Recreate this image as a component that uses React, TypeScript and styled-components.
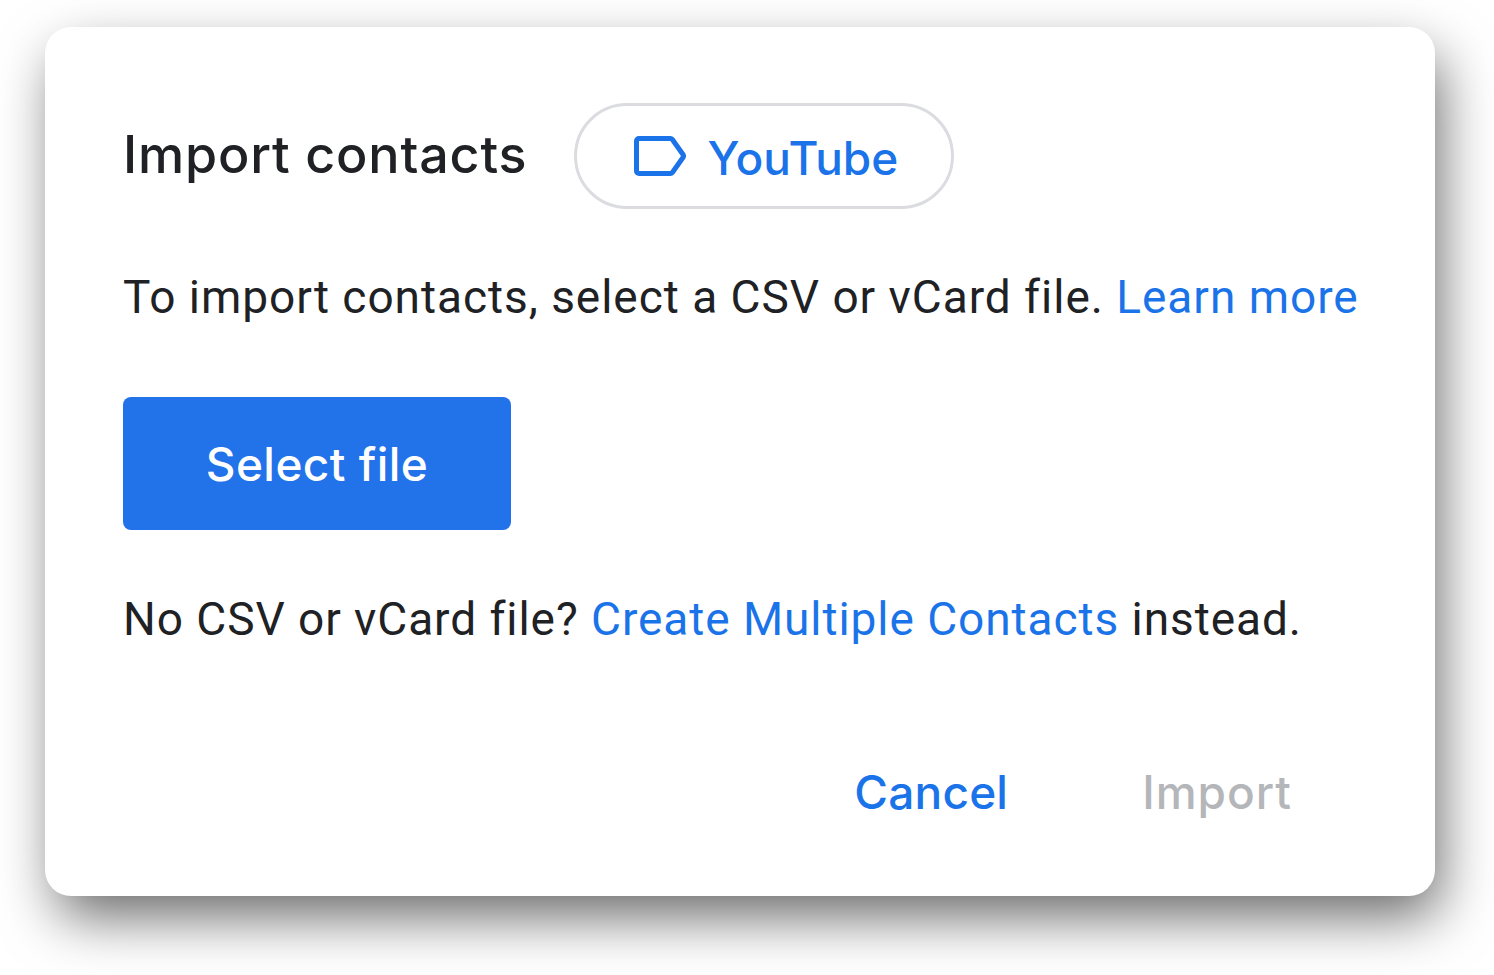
import React from "react";
import styled, { createGlobalStyle } from "styled-components";

const Global = createGlobalStyle`
  html, body { margin: 0; padding: 0; background: #fff; }
  body { font-family: Roboto, "Liberation Sans", sans-serif; overflow: hidden; }
`;

const Page = styled.div`
  width: 1494px;
  height: 975px;
  box-sizing: border-box;
  padding: 27px 59px 79px 45px;
  background: #fff;
`;

const Dialog = styled.div`
  width: 1390px;
  height: 869px;
  box-sizing: border-box;
  padding: 76px 78px 0 78px;
  background: #fff;
  border-radius: 26px;
  box-shadow: 8px 24px 56px -4px rgba(0, 0, 0, 0.6);
  display: flex;
  flex-direction: column;
`;

const Header = styled.div`
  display: flex;
  align-items: center;
  gap: 47px;
  height: 106px;
`;

const Title = styled.h1`
  margin: 0 0 3px;
  font-family: Inter, sans-serif;
  font-size: 52px;
  font-weight: 500;
  color: #202124;
  letter-spacing: 0.83px;
`;

const Chip = styled.div`
  width: 380px;
  height: 106px;
  box-sizing: border-box;
  border: 3px solid #dadce0;
  border-radius: 53px;
  padding: 4px 0 0 4px;
  display: flex;
  align-items: center;
  justify-content: center;
  gap: 21px;
  color: #1a73e8;
  font-family: Inter, sans-serif;
  font-size: 46px;
  font-weight: 500;
`;

const ChipIcon = styled.svg`
  margin-bottom: 4px;
`;

const Paragraph = styled.p`
  margin: 0;
  font-size: 46px;
  line-height: 54px;
  letter-spacing: 0.97px;
  color: #202124;
  white-space: nowrap;
`;

const Intro = styled(Paragraph)`
  margin-top: 61px;
`;

const Alt = styled(Paragraph)`
  margin-top: 62px;
  letter-spacing: 0.94px;
`;

const TextLink = styled.a`
  color: #1a73e8;
`;

const SelectButton = styled.button`
  margin-top: 73px;
  width: 388px;
  height: 133px;
  border: 0;
  border-radius: 8px;
  background: #2272ea;
  color: #fff;
  font-family: Inter, sans-serif;
  font-size: 46px;
  font-weight: 500;
  letter-spacing: 0.45px;
`;

const Actions = styled.div`
  margin-top: auto;
  margin-bottom: 77px;
  margin-right: 65px;
  display: flex;
  justify-content: flex-end;
  gap: 134px;
`;

const ActionButton = styled.button<{ $disabled?: boolean }>`
  padding: 0;
  border: 0;
  background: none;
  font-family: Inter, sans-serif;
  font-size: 46px;
  line-height: 54px;
  font-weight: 500;
  letter-spacing: ${(p) => (p.$disabled ? "1px" : "0.2px")};
  color: ${(p) => (p.$disabled ? "#b4b6b9" : "#1a73e8")};
`;

export default function App() {
  return (
    <Page>
      <Global />
      <Dialog>
        <Header>
          <Title>Import contacts</Title>
          <Chip>
            <ChipIcon width="52" height="40" viewBox="0 0 52 40" fill="none">
              <path
                d="M5 2.5H36.5Q37.5 2.500 38.200 3.300L49 18.500Q50 20 49 21.500L38.200 36.700Q37.500 37.500 36.500 37.500H5A2.500 2.500 0 0 1 2.500 35V5A2.500 2.500 0 0 1 5 2.500Z"
                stroke="#1a73e8"
                strokeWidth="5"
                strokeLinejoin="round"
              />
            </ChipIcon>
            YouTube
          </Chip>
        </Header>
        <Intro>
          To import contacts, select a CSV or vCard file. <TextLink>Learn more</TextLink>
        </Intro>
        <SelectButton>Select file</SelectButton>
        <Alt>
          No CSV or vCard file? <TextLink>Create Multiple Contacts</TextLink> instead.
        </Alt>
        <Actions>
          <ActionButton>Cancel</ActionButton>
          <ActionButton $disabled>Import</ActionButton>
        </Actions>
      </Dialog>
    </Page>
  );
}
